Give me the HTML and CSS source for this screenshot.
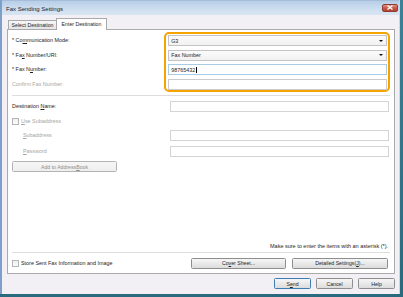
FILE: index.html
```html
<!DOCTYPE html>
<html>
<head>
<meta charset="utf-8">
<title>Fax Sending Settings</title>
<link rel="stylesheet" href="styles.css">
</head>
<body>
<div class="desktop">
  <div class="window">
    <div class="titlebar">
      <span class="title">Fax Sending Settings</span>
      <span class="close"><svg width="8" height="5" viewBox="0 0 8 5"><path d="M1.5 0.5 L6.5 4.5 M6.5 0.5 L1.5 4.5" stroke="#fff" stroke-width="1.3" fill="none"/></svg></span>
    </div>
    <div class="client">
      <div class="tabs">
        <div class="tab">Select Destination</div>
        <div class="tab active">Enter Destination</div>
      </div>
      <div class="panel">
        <div class="required">
          <div class="labels">
            <div class="lbl">* Co<u>m</u>munication Mode:</div>
            <div class="lbl">* Fa<u>x</u> Number/URI:</div>
            <div class="lbl">* Fax N<u>u</u>mber:</div>
            <div class="lbl disabled">Confirm Fax Number:</div>
          </div>
          <div class="highlight">
            <div class="combo"><span>G3</span><span class="arrow"></span></div>
            <div class="combo"><span>Fax Number</span><span class="arrow"></span></div>
            <div class="input focus"><span>98765432</span><span class="caret"></span></div>
            <div class="input"></div>
          </div>
        </div>
        <div class="sep"></div>
        <div class="form">
          <div class="lbl">Destination <u>N</u>ame:</div>
          <div class="input"></div>
          <div class="check-row disabled"><span class="box"></span><span><u>U</u>se Subaddress</span></div>
          <div></div>
          <div class="lbl indent disabled"><u>S</u>ubaddress</div>
          <div class="input"></div>
          <div class="lbl indent disabled"><u>P</u>assword</div>
          <div class="input"></div>
          <div class="btn disabled wide">Add to Address <u>B</u>ook</div>
        </div>
        <div class="spacer"></div>
        <div class="note">Make sure to enter the items with an asterisk (*).</div>
        <div class="sep"></div>
        <div class="footer">
          <div class="check-row"><span class="box"></span><span>Store Sent Fax Information and Image</span></div>
          <div class="footer-btns">
            <div class="btn cover">Co<u>v</u>er Sheet...</div>
            <div class="btn detail">Detailed Settings(<u>J</u>)...</div>
          </div>
        </div>
      </div>
      <div class="actions">
        <div class="btn small default">S<u>e</u>nd</div>
        <div class="btn small">Cancel</div>
        <div class="btn small">Help</div>
      </div>
    </div>
  </div>
</div>
</body>
</html>
```
FILE: styles.css
```css
* { box-sizing: border-box; }
html, body { margin: 0; padding: 0; }
body {
  width: 403px;
  height: 297px;
  overflow: hidden;
  font-family: "Liberation Sans", Arial, sans-serif;
  font-size: 5.4px;
  color: #1e1e1e;
}
u { text-decoration-thickness: 0.4px; text-underline-offset: 0.8px; }

.desktop {
  width: 403px;
  height: 297px;
  background: linear-gradient(#3b8197, #2a6a7f);
}
.window {
  width: 400px;
  height: 294px;
  display: flex;
  flex-direction: column;
  border-left: 2px solid #7d9fca;
  background: #f2f0f5;
  border-right: 1px solid #c9d6e6;
}
.titlebar {
  height: 15px;
  display: flex;
  align-items: center;
  justify-content: space-between;
  background: linear-gradient(#b7cee7, #cfdff0 60%, #d8e5f2);
  border-top: 1px solid #a5bdd9;
  padding: 1px 1px 0 4px;
}
.title {
  font-size: 6px;
  color: #1b1b1b;
}
.close {
  width: 16px;
  height: 8px;
  margin-top: -2px;
  border-radius: 2px;
  border: 1px solid #8c3d33;
  background: linear-gradient(#e19383, #c65a4a 50%, #b8412f);
  display: flex;
  align-items: center;
  justify-content: center;
}
.close svg { display: block; }

.client {
  flex: 1;
  display: flex;
  flex-direction: column;
  padding: 3px 4px 0 5px;
}

.tabs {
  height: 11px;
  display: flex;
  align-items: flex-end;
  position: relative;
  z-index: 1;
}
.tab {
  height: 9px;
  width: 49px;
  margin-left: 1px;
  border: 1px solid #a9a9a9;
  border-bottom: none;
  background: linear-gradient(#f7f7f7, #e4e4e4);
  font-size: 5.2px;
  line-height: 8px;
  text-align: center;
  color: #1e1e1e;
}
.tab.active {
  height: 12px;
  width: 51px;
  margin-left: -1px;
  margin-bottom: -1px;
  background: #fff;
  line-height: 10px;
}

.panel {
  height: 245px;
  background: #fff;
  border: 1px solid #aaaaaa;
  padding: 2px 4px 0 4px;
  display: flex;
  flex-direction: column;
}

.required {
  display: flex;
}
.labels {
  width: 153px;
  padding-top: 3px;
  display: flex;
  flex-direction: column;
  gap: 3.5px;
}
.lbl {
  height: 11px;
  line-height: 11px;
  white-space: nowrap;
}
.disabled { color: #a6a6a6; }
.highlight {
  width: 227px;
  height: 60px;
  border: 2px solid #f5a300;
  border-radius: 5px;
  padding: 1px 1px 0 2px;
  display: flex;
  flex-direction: column;
  gap: 3.5px;
}
.combo, .input {
  height: 11px;
  border: 1px solid #cccccc;
  background: #fff;
  display: flex;
  align-items: center;
  padding: 0 2px;
}
.combo {
  justify-content: space-between;
  border-color: #c4c4c4;
  background: linear-gradient(#fbfbfb, #f1f1f1);
}
.arrow {
  width: 0;
  height: 0;
  border-left: 2px solid transparent;
  border-right: 2px solid transparent;
  border-top: 2.5px solid #111;
  margin-right: 1px;
}
.input.focus { border-color: #a9cbe6; }
.caret {
  width: 0.6px;
  height: 6px;
  background: #000;
  margin-left: 0.5px;
}

.sep {
  height: 1px;
  background: #dddddd;
  margin-top: 3px;
  flex: none;
}

.form {
  margin-top: 5px;
  display: grid;
  grid-template-columns: 158px 219px;
  grid-template-rows: 11px 10px 11.5px 11.5px 11px;
  row-gap: 4px;
}
.form .input { border-color: #d4d4d4; }
.indent { padding-left: 11px; }
.check-row {
  display: flex;
  align-items: center;
  gap: 2px;
  white-space: nowrap;
}
.box {
  width: 7px;
  height: 7px;
  border: 1px solid #b5b5b5;
  background: linear-gradient(#f0f0f0, #fafafa);
  flex: none;
}

.btn {
  height: 11px;
  border: 1px solid #8e8e8e;
  border-radius: 1.5px;
  background: linear-gradient(#f6f6f6, #e9e9e9 50%, #dcdcdc);
  display: flex;
  align-items: center;
  justify-content: center;
  font-size: 5.2px;
  white-space: nowrap;
}
.btn.disabled {
  border-color: #b3b3b3;
  background: linear-gradient(#f6f6f6, #eeeeee);
  color: #8f8f8f;
}
.btn.wide { width: 105px; }

.spacer { flex: 1; }
.note {
  text-align: right;
  font-size: 5.5px;
  line-height: 8px;
  padding-right: 2px;
}
.note + .sep { margin-top: 2px; }

.footer {
  height: 20px;
  display: flex;
  align-items: center;
  justify-content: space-between;
  padding-right: 2px;
}
.footer-btns {
  display: flex;
  gap: 6px;
}
.btn.cover { width: 95px; }
.btn.detail { width: 96px; }

.actions {
  margin-top: 4px;
  display: flex;
  justify-content: flex-end;
  gap: 5px;
}
.btn.small { width: 37px; }
.btn.default { border-color: #3d7cb2; }
```
